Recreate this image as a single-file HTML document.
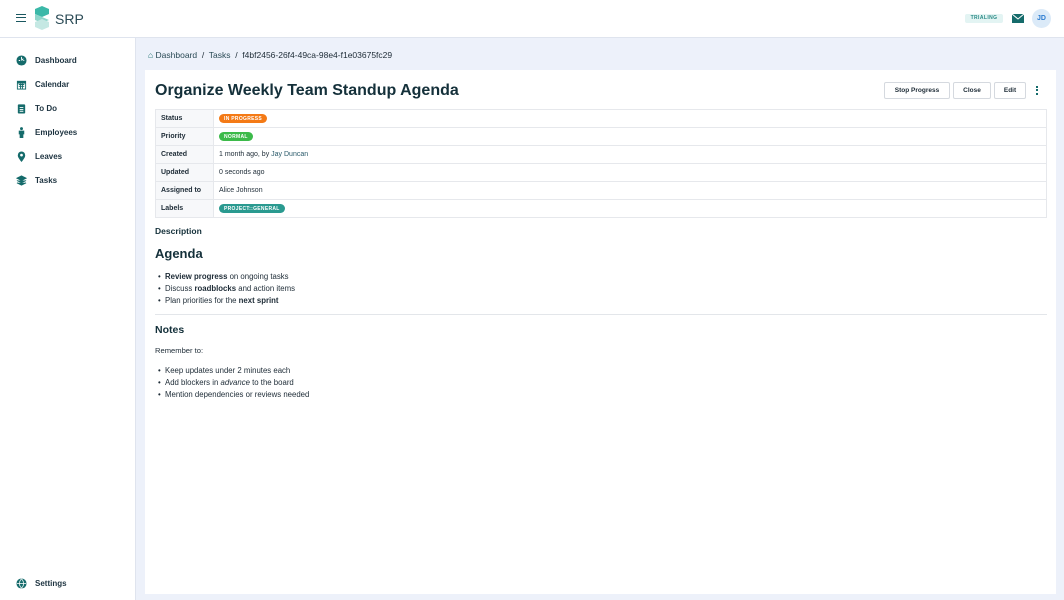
<!DOCTYPE html>
<html><head><meta charset="utf-8"><style>
*{box-sizing:border-box;margin:0;padding:0}
body{width:1064px;height:600px;overflow:hidden;font-family:"Liberation Sans",sans-serif;background:#edf1fa;color:#1d2b36;position:relative}
.hdr{position:absolute;left:0;top:0;width:1064px;height:38px;background:#fff;border-bottom:1px solid #dfe4ee}
.side{position:absolute;left:0;top:38px;width:136px;height:562px;background:#fff;border-right:1px solid #dfe4ee}
.nav{position:absolute;left:16px;font-size:8px;font-weight:bold;color:#1d3340;display:flex;align-items:center}
.nav svg{width:11px;height:11px;margin-right:8px}
.card{position:absolute;left:145px;top:70px;width:911px;height:524px;background:#fff}
h1{position:absolute;left:10px;top:12px;font-size:16px;font-weight:bold;color:#14303a}
table{position:absolute;left:10px;top:39px;width:892px;border-collapse:collapse;font-size:7px}
td{border:1px solid #e6e8ec;height:18px;padding:0 5px}
td.l{width:58px;background:#f7f8fa;font-weight:bold}
.b{display:inline-block;color:#fff;font-weight:bold;font-size:5px;border-radius:5px;padding:1.5px 5px;letter-spacing:.3px}
.btn{position:absolute;top:12px;height:17px;border:1px solid #d5d9df;border-radius:2px;font-size:6.5px;font-weight:bold;display:flex;align-items:center;justify-content:center;background:#fff}
.t{position:absolute;left:10px;font-size:7.6px}
ul{position:absolute;left:13px;font-size:7.8px;list-style:none;line-height:12px}
ul li:before{content:"•";display:inline-block;width:7px}
</style></head><body>
<div class="hdr">
 <div style="position:absolute;left:16px;top:14px;width:10px;height:8px;border-top:1.5px solid #1a5760;border-bottom:1.5px solid #1a5760"><div style="margin-top:1.8px;height:1.5px;background:#1a5760"></div></div>
 <svg style="position:absolute;left:35px;top:6px" width="15" height="24" viewBox="0 0 15 24"><polygon points="0,3 7,0 14,3 14,8 7,11 0,8" fill="#3bb8a8"/><polygon points="0,8 7,11 14,14 7,17 0,14" fill="#8fd6cb"/><polygon points="0,16 7,13 14,16 14,21 7,24 0,21" fill="#c5e8e3"/></svg>
 <div style="position:absolute;left:55px;top:11px;font-size:14px;color:#2a4a55">SRP</div>
 <div style="position:absolute;left:965px;top:14px;width:38px;height:9px;background:#e3f4f3;border-radius:2px;font-size:5px;font-weight:bold;color:#2a8a86;text-align:center;line-height:9px;letter-spacing:.4px">TRIALING</div>
 <svg style="position:absolute;left:1012px;top:14px" width="12" height="9" viewBox="0 0 12 9"><rect width="12" height="9" fill="#156b6b"/><path d="M0 0L6 5L12 0" stroke="#fff" fill="none" stroke-width="1"/></svg>
 <div style="position:absolute;left:1032px;top:9px;width:19px;height:19px;border-radius:50%;background:#dbeaf8;color:#2a7bd0;font-size:7px;font-weight:bold;text-align:center;line-height:19px">JD</div>
</div>
<div class="side">
 <div class="nav" style="top:17px"><svg viewBox="0 0 12 12"><circle cx="6" cy="6" r="5.5" fill="#156b6b"/><path d="M6 2v3M3 6h1.5M8 6h1M6 6l2-2" stroke="#fff" stroke-width="1"/></svg>Dashboard</div>
 <div class="nav" style="top:41px"><svg viewBox="0 0 12 12"><rect x="1" y="2" width="10" height="9.5" fill="#156b6b"/><rect x="2" y="5" width="8" height="5.5" fill="#fff"/><path d="M3 6h6M3 8h6M5 5v6M7 5v6" stroke="#156b6b"/></svg>Calendar</div>
 <div class="nav" style="top:65px"><svg viewBox="0 0 12 12"><rect x="2" y="1.5" width="8" height="10" rx="1" fill="#156b6b"/><path d="M4 5h4M4 7h4M4 9h4" stroke="#fff"/></svg>To Do</div>
 <div class="nav" style="top:89px"><svg viewBox="0 0 12 12"><circle cx="6" cy="1.8" r="1.6" fill="#156b6b"/><path d="M3 4h6v4h-1v4h-4v-4h-1z" fill="#156b6b"/></svg>Employees</div>
 <div class="nav" style="top:113px"><svg viewBox="0 0 12 12"><path d="M6 12C2 7 2 6 2 4.5a4 4 0 018 0C10 6 10 7 6 12z" fill="#156b6b"/><circle cx="6" cy="4.5" r="1.5" fill="#fff"/></svg>Leaves</div>
 <div class="nav" style="top:137px"><svg viewBox="0 0 12 12"><path d="M6 1L11 3.5L6 6L1 3.5z M1 6L6 8.5L11 6 M1 8.5L6 11L11 8.5" fill="#156b6b" stroke="#156b6b"/></svg>Tasks</div>
 <div class="nav" style="top:540px"><svg viewBox="0 0 12 12"><circle cx="6" cy="6" r="5.5" fill="#156b6b"/><path d="M1 6h10M6 1c-3 3-3 7 0 10M6 1c3 3 3 7 0 10" stroke="#fff" stroke-width=".8" fill="none"/></svg>Settings</div>
</div>
<div style="position:absolute;left:148px;top:50px;font-size:8.5px;color:#1d2b36"><span style="color:#156b6b">⌂</span> <span style="color:#2a4a55">Dashboard</span> &nbsp;/&nbsp; <span style="color:#2a4a55">Tasks</span> &nbsp;/&nbsp; f4bf2456-26f4-49ca-98e4-f1e03675fc29</div>
<div class="card">
 <h1>Organize Weekly Team Standup Agenda</h1>
 <div class="btn" style="left:739px;width:66px">Stop Progress</div>
 <div class="btn" style="left:808px;width:38px">Close</div>
 <div class="btn" style="left:849px;width:32px">Edit</div>
 <div style="position:absolute;left:891px;top:16px;width:2px;height:9px;border-left:2px dotted #156b6b"></div>
 <table>
 <tr><td class="l">Status</td><td><span class="b" style="background:#f47a16">IN PROGRESS</span></td></tr>
 <tr><td class="l">Priority</td><td><span class="b" style="background:#3cba4a">NORMAL</span></td></tr>
 <tr><td class="l">Created</td><td>1 month ago, by <span style="color:#2a5a6a">Jay Duncan</span></td></tr>
 <tr><td class="l">Updated</td><td>0 seconds ago</td></tr>
 <tr><td class="l">Assigned to</td><td>Alice Johnson</td></tr>
 <tr><td class="l">Labels</td><td><span class="b" style="background:#2a9a90">PROJECT::GENERAL</span></td></tr>
 </table>
 <div class="t" style="top:156px;font-size:8.5px;font-weight:bold;color:#14303a">Description</div>
 <div class="t" style="top:176px;font-size:13px;font-weight:bold;color:#14303a">Agenda</div>
 <ul style="top:201px"><li><b>Review progress</b> on ongoing tasks</li><li>Discuss <b>roadblocks</b> and action items</li><li>Plan priorities for the <b>next sprint</b></li></ul>
 <div style="position:absolute;left:10px;top:244px;width:892px;height:1px;background:#e3e6ea"></div>
 <div class="t" style="top:254px;font-size:10.5px;font-weight:bold;color:#14303a">Notes</div>
 <div class="t" style="top:276px">Remember to:</div>
 <ul style="top:295px"><li>Keep updates under 2 minutes each</li><li>Add blockers in <i>advance</i> to the board</li><li>Mention dependencies or reviews needed</li></ul>
</div>
</body></html>
